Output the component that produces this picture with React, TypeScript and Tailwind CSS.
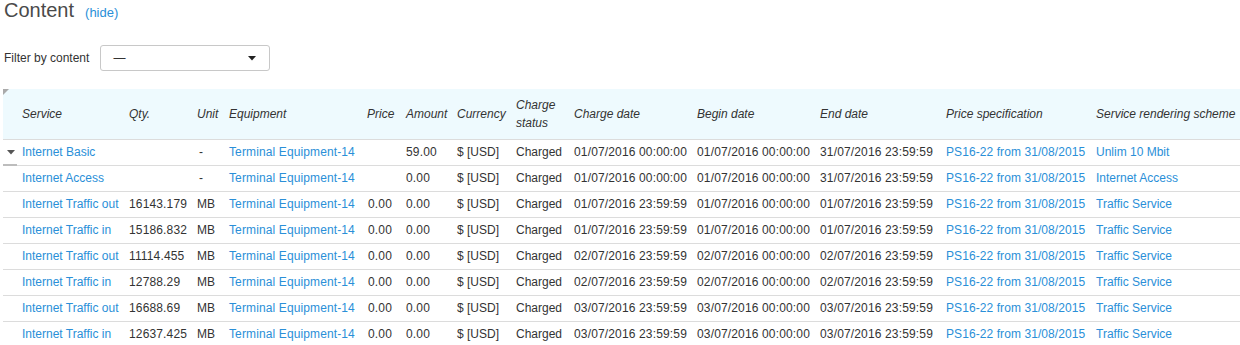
import React from "react";

type Row = {
  service: string;
  qty: string;
  unit: string;
  amount: string;
  price: string;
  chargeDate: string;
  beginDate: string;
  endDate: string;
  scheme: string;
};

const rows: Row[] = [
  { service: "Internet Basic", qty: "", unit: "-", price: "", amount: "59.00", chargeDate: "01/07/2016 00:00:00", beginDate: "01/07/2016 00:00:00", endDate: "31/07/2016 23:59:59", scheme: "Unlim 10 Mbit" },
  { service: "Internet Access", qty: "", unit: "-", price: "", amount: "0.00", chargeDate: "01/07/2016 00:00:00", beginDate: "01/07/2016 00:00:00", endDate: "31/07/2016 23:59:59", scheme: "Internet Access" },
  { service: "Internet Traffic out", qty: "16143.179", unit: "MB", price: "0.00", amount: "0.00", chargeDate: "01/07/2016 23:59:59", beginDate: "01/07/2016 00:00:00", endDate: "01/07/2016 23:59:59", scheme: "Traffic Service" },
  { service: "Internet Traffic in", qty: "15186.832", unit: "MB", price: "0.00", amount: "0.00", chargeDate: "01/07/2016 23:59:59", beginDate: "01/07/2016 00:00:00", endDate: "01/07/2016 23:59:59", scheme: "Traffic Service" },
  { service: "Internet Traffic out", qty: "11114.455", unit: "MB", price: "0.00", amount: "0.00", chargeDate: "02/07/2016 23:59:59", beginDate: "02/07/2016 00:00:00", endDate: "02/07/2016 23:59:59", scheme: "Traffic Service" },
  { service: "Internet Traffic in", qty: "12788.29", unit: "MB", price: "0.00", amount: "0.00", chargeDate: "02/07/2016 23:59:59", beginDate: "02/07/2016 00:00:00", endDate: "02/07/2016 23:59:59", scheme: "Traffic Service" },
  { service: "Internet Traffic out", qty: "16688.69", unit: "MB", price: "0.00", amount: "0.00", chargeDate: "03/07/2016 23:59:59", beginDate: "03/07/2016 00:00:00", endDate: "03/07/2016 23:59:59", scheme: "Traffic Service" },
  { service: "Internet Traffic in", qty: "12637.425", unit: "MB", price: "0.00", amount: "0.00", chargeDate: "03/07/2016 23:59:59", beginDate: "03/07/2016 00:00:00", endDate: "03/07/2016 23:59:59", scheme: "Traffic Service" },
];

const widths = [19, 107, 68, 32, 138, 39, 51, 59, 58, 123, 123, 126, 150, 144];

const link = "text-[#2a8fd8]";
const num = "p-0 tracking-[0.15px]";

export default function App() {
  return (
    <div
      className="w-[1240px] h-[345px] overflow-hidden bg-white text-[#333] pl-[3px]"
      style={{ fontFamily: '"Liberation Sans", Arial, sans-serif' }}
    >
      <div className="flex items-baseline pl-[1px]">
        <h1 className="m-0 text-[20px] leading-[20px] font-normal text-[#4a4a4a]">Content</h1>
        <span className={`ml-[11px] text-[13px] leading-[20px] ${link}`}>(hide)</span>
      </div>

      <div className="flex items-center mt-[22px] h-[26px] pl-[1px]">
        <span className="text-[12px] leading-[14px]">Filter by content</span>
        <div className="ml-[11px] w-[170px] h-[26px] border border-[#c8c8c8] rounded-[3px] flex items-center justify-between pl-[12px] pr-[13px]">
          <span className="text-[12px] leading-[14px]">—</span>
          <svg width="8" height="5" viewBox="0 0 8 5" className="block">
            <polygon points="0,0 8,0 4,4.5" fill="#222" />
          </svg>
        </div>
      </div>

      <table className="mt-[18px] table-fixed border-collapse text-[12px] w-[1237px]">
        <colgroup>
          {widths.map((w, i) => (
            <col key={i} style={{ width: w }} />
          ))}
        </colgroup>
        <thead>
          <tr className="bg-[#eefafe] h-[50px] border-b border-[#dcdcdc] italic text-[#333]">
            <th className="relative p-0 font-normal align-middle">
              <svg width="6" height="6" viewBox="0 0 6 6" className="absolute left-0 top-0">
                <polygon points="0,0 6,0 0,6" fill="#aaa" />
              </svg>
            </th>
            <th className="p-0 font-normal text-left">Service</th>
            <th className="p-0 font-normal text-left">Qty.</th>
            <th className="p-0 font-normal text-left">Unit</th>
            <th className="p-0 font-normal text-left">Equipment</th>
            <th className="p-0 font-normal text-left">Price</th>
            <th className="p-0 font-normal text-left">Amount</th>
            <th className="p-0 font-normal text-left">Currency</th>
            <th className="p-0 font-normal text-left leading-[18px]">
              Charge
              <br />
              status
            </th>
            <th className="p-0 font-normal text-left">Charge date</th>
            <th className="p-0 font-normal text-left">Begin date</th>
            <th className="p-0 font-normal text-left">End date</th>
            <th className="p-0 font-normal text-left">Price specification</th>
            <th className="p-0 font-normal text-left whitespace-nowrap">Service rendering scheme</th>
          </tr>
        </thead>
        <tbody>
          {rows.map((r, i) => (
            <tr key={i} className="h-[26px] border-b border-[#dcdcdc] whitespace-nowrap">
              <td className="relative p-0">
                {i === 0 && (
                  <>
                    <svg width="8" height="5" viewBox="0 0 8 5" className="absolute left-[4px] top-[10px]">
                      <polygon points="0,0 8,0 4,4.5" fill="#555" />
                    </svg>
                    <div className="absolute left-0 bottom-[-1px] w-[14px] h-[2px] bg-[#bdbdbd]" />
                  </>
                )}
              </td>
              <td className={`p-0 ${link}`}>{r.service}</td>
              <td className={num}>{r.qty}</td>
              <td className={`p-0 ${r.unit === "-" ? "pl-[2px]" : ""}`}>{r.unit}</td>
              <td className={`p-0 tracking-[0.12px] ${link}`}>Terminal Equipment-14</td>
              <td className={`${num} pl-[1px]`}>{r.price}</td>
              <td className={num}>{r.amount}</td>
              <td className="p-0">$ [USD]</td>
              <td className="p-0">Charged</td>
              <td className={num}>{r.chargeDate}</td>
              <td className={num}>{r.beginDate}</td>
              <td className={num}>{r.endDate}</td>
              <td className={`p-0 tracking-[0.08px] ${link}`}>PS16-22 from 31/08/2015</td>
              <td className={`p-0 ${link}`}>{r.scheme}</td>
            </tr>
          ))}
        </tbody>
      </table>
    </div>
  );
}
